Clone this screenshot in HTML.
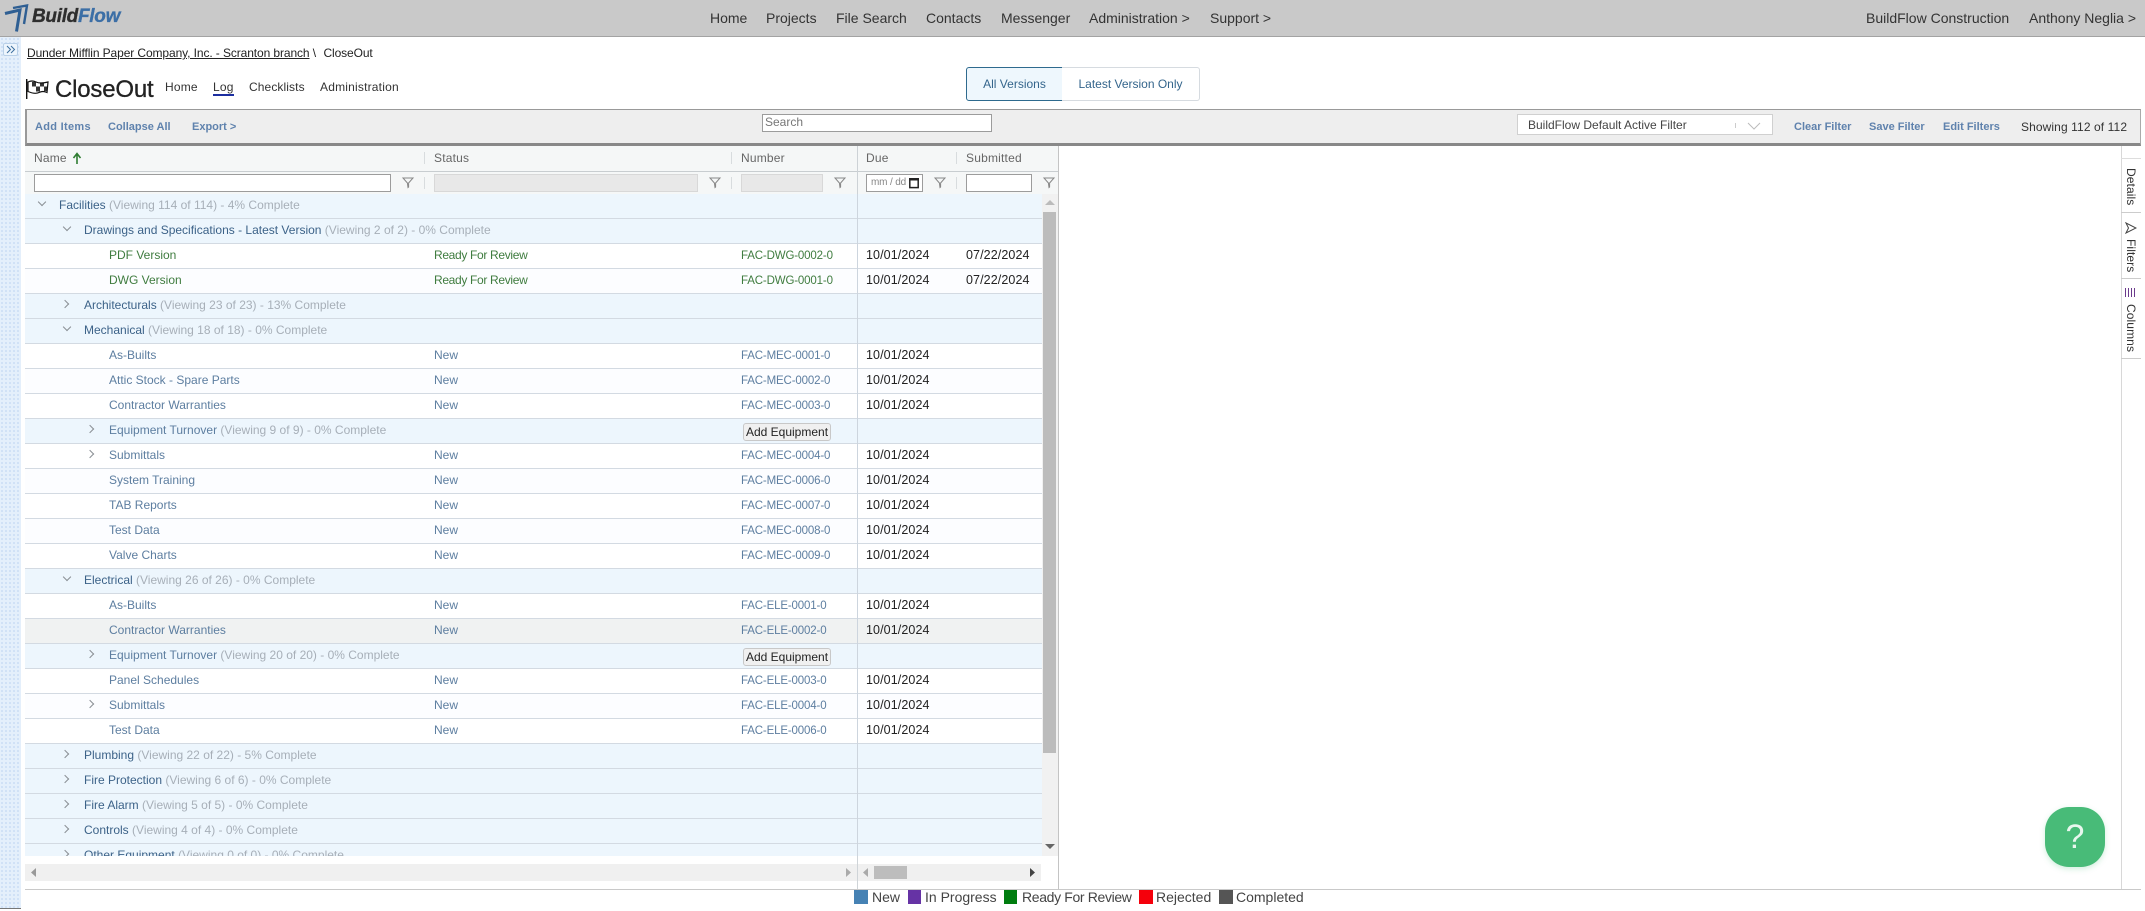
<!DOCTYPE html>
<html lang="en"><head><meta charset="utf-8"><title>CloseOut</title>
<style>
*{box-sizing:border-box}
html,body{margin:0;padding:0;width:2145px;height:911px;overflow:hidden;background:#fff;font-family:"Liberation Sans",sans-serif;font-size:12px;color:#333}
.a{position:absolute;white-space:nowrap}
#top{left:0;top:0;width:2145px;height:37px;background:#c9c9c9;border-bottom:1px solid #a3a3a3}
.n{top:9px;font-size:14px;color:#333;line-height:18px}
#side{left:0;top:37px;width:21px;height:872px;background-color:#e4effb;background-image:radial-gradient(#cfe0f6 1px,transparent 1.2px);background-size:4px 4px;border-bottom:1px solid #777}
#tog{left:3px;top:43px;width:15px;height:13px;background:#edf5fd;border:1px solid #b9d0e8;border-radius:2px}
.tab{top:80px;font-size:12px;letter-spacing:.2px;color:#333;line-height:14px}
#tb{left:25px;top:109px;width:2116px;height:37px;background:#eee;border:2px solid #999;border-width:1px 1px 3px 2px;border-color:#999 #aaa #888 #999}
.l{top:120px;font-size:11px;font-weight:bold;color:#5f82ad;line-height:14px}
.inp{position:absolute;background:#fff;border:1px solid #9c9c9c}
.dis{background:#e8e8e8;border:1px solid #d8d8d8}
#hd{left:25px;top:146px;width:1034px;height:48px;background:#f5f7f7;border-right:1px solid #ccc}
.hl{top:171px;left:25px;width:1034px;height:1px;background:#c8cdd0}
.h{top:151px;font-size:12px;letter-spacing:.2px;color:#666;line-height:15px}
.sep{width:1px;height:12px;background:#d8dcde;top:152px}
.sep2{width:1px;height:12px;background:#d8dcde;top:177px}
#rows{left:25px;top:194px;width:1017px;height:662px;overflow:hidden}
.r{position:relative;height:25px;width:1017px;border-bottom:1px solid #d3dae2;background:#fcfdff;line-height:22px;font-size:12px;color:#5d7ea0}
.r>*{position:absolute;top:0;white-space:nowrap}
.g{background:#edf6fd;color:#3c6288}
.g b{font-weight:normal;color:#a7afb8;position:static}
.w{background:#fff}
.hov{background:#f0f2f2}
.ready{color:#3f7c3f}
.ready .st{letter-spacing:-.33px}
.nm{left:84px}.nm1{left:59px}.nm0{left:34px}
.st{left:409px}
.r>.no{left:716px;top:1px;font-size:11.5px;letter-spacing:-.15px}
.du{left:841px;color:#222;font-size:12.5px;letter-spacing:.1px}
.su{left:941px;color:#222;font-size:12.5px;letter-spacing:.1px}
.vl{left:832px;top:0;width:1px;height:25px;background:#cdd5de}
.c{width:6px;height:6px;top:7px;border-right:1px solid #8a8f94;border-bottom:1px solid #8a8f94}
.cd{transform:rotate(45deg)}
.cr{transform:rotate(-45deg)}
.btn{left:718px;top:4px;width:88px;height:18px;background:#f0f0f0;border:1px solid #c8c8c8;border-radius:3px;font-size:12px;line-height:16px;text-align:center;color:#222}
.r>.btn{top:4px}
.r>.c{top:7px}
.r>.c.cd{top:5px}
.sw{top:890px;height:14px;width:14px}
.lg{top:889px;font-size:14px;line-height:16px;color:#444}
.vt{position:absolute;writing-mode:vertical-rl;font-size:12px;letter-spacing:.1px;color:#333;line-height:16px;white-space:nowrap}
svg{display:block}
</style></head><body>
<div class="a" id="top"></div>
<svg class="a" style="left:0;top:0" width="32" height="36" viewBox="0 0 32 36"><path d="M5 13.5 L20 10 L16.5 31.5" fill="none" stroke="#2f5f93" stroke-width="3"/><path d="M13 8 L27 5.5 L24 24" fill="none" stroke="#2f5f93" stroke-width="2.4"/></svg>
<div class="a" style="left:32px;top:5px;font-size:19px;line-height:24px;font-weight:bold;font-style:italic;letter-spacing:-.3px;color:#2e2e2e;-webkit-text-stroke:.3px">Build<span style="color:#3c6fa6">Flow</span></div>
<div class="a n" style="left:710px">Home</div><div class="a n" style="left:766px">Projects</div><div class="a n" style="left:836px">File Search</div><div class="a n" style="left:926px">Contacts</div><div class="a n" style="left:1001px">Messenger</div><div class="a n" style="left:1089px">Administration &gt;</div><div class="a n" style="left:1210px">Support &gt;</div>
<div class="a n" style="left:1866px">BuildFlow Construction</div><div class="a n" style="left:2029px">Anthony Neglia &gt;</div>

<div class="a" id="side"></div><div class="a" id="tog"></div>
<svg class="a" style="left:6px;top:45px" width="10" height="9" viewBox="0 0 10 9"><path d="M1 1 L4.5 4.5 L1 8 M5 1 L8.5 4.5 L5 8" fill="none" stroke="#3d6f9f" stroke-width="1"/></svg>
<div class="a" style="left:27px;top:45px;font-size:12px;line-height:16px;color:#222;letter-spacing:-.1px"><span style="text-decoration:underline">Dunder Mifflin Paper Company, Inc. - Scranton branch</span> \ &nbsp;<span style="margin-left:1px">CloseOut</span></div>

<svg class="a" style="left:26px;top:79px" width="23" height="20" viewBox="0 0 23 20"><rect x="0" y="0" width="1.4" height="20" fill="#111"/><path d="M2 3 Q6 1 10 3 T22 3 L21 13.5 Q17 11.5 13 13.5 T2 12.5 Z" fill="#fff" stroke="#111" stroke-width="1.2"/><path d="M6 3 L10 3 L10 7.5 L6 7.5 Z M14 3.5 L18 3.5 L18 7.5 L14 7.5 Z M10 7.5 L14 7.5 L14 12.5 L10 12.5 Z M18 7.5 L21 7.5 L21 12 L18 12 Z" fill="#111" opacity=".85"/></svg>
<div class="a" style="left:55px;top:74px;font-size:24px;line-height:31px;color:#222;letter-spacing:-.2px;-webkit-text-stroke:.3px #222">CloseOut</div>
<div class="a tab" style="left:165px">Home</div>
<div class="a tab" style="left:213px;border-bottom:2px solid #1c2ea0;height:16px">Log</div>
<div class="a tab" style="left:249px;letter-spacing:.1px">Checklists</div>
<div class="a tab" style="left:320px">Administration</div>

<div class="a" style="left:966px;top:67px;width:97px;height:34px;background:#eef7fd;border:1px solid #2e6a8e;border-radius:3px 0 0 3px;color:#34658c;text-align:center;line-height:32px;font-size:12px">All Versions</div>
<div class="a" style="left:1062px;top:67px;width:138px;height:34px;background:#fff;border:1px solid #d6dbe0;border-left:0;border-radius:0 3px 3px 0;color:#34658c;text-align:center;line-height:32px;font-size:12px">Latest Version Only</div>

<div class="a" id="tb"></div>
<div class="a l" style="left:35px;letter-spacing:.3px">Add Items</div><div class="a l" style="left:108px">Collapse All</div><div class="a l" style="left:192px">Export &gt;</div>
<div class="a" style="left:762px;top:114px;width:230px;height:18px;background:#fff;border:1px solid #9c9c9c;color:#777;font-size:12px;line-height:15px;padding-left:2px">Search</div>
<div class="a" style="left:1517px;top:114px;width:256px;height:21px;background:#fff;border:1px solid #d0d0d0;color:#444;font-size:12px;line-height:21px;padding-left:10px">BuildFlow Default Active Filter</div>
<div class="a" style="left:1735px;top:123px;width:1px;height:5px;background:#ccc"></div>
<svg class="a" style="left:1747px;top:122px" width="14" height="8" viewBox="0 0 14 8"><path d="M1 1 L7 7 L13 1" fill="none" stroke="#bbb" stroke-width="1"/></svg>
<div class="a l" style="left:1794px">Clear Filter</div><div class="a l" style="left:1869px">Save Filter</div><div class="a l" style="left:1943px">Edit Filters</div>
<div class="a" style="left:2021px;top:120px;font-size:12px;line-height:14px;color:#333;letter-spacing:.1px">Showing 112 of 112</div>

<div class="a" id="hd"></div><div class="a hl"></div>
<div class="a h" style="left:34px">Name</div>
<svg class="a" style="left:72px;top:152px" width="10" height="13" viewBox="0 0 10 13"><path d="M5 12 V2 M1.5 6 L5 1.5 L8.5 6" fill="none" stroke="#2f7d32" stroke-width="1.6"/></svg>
<div class="a h" style="left:434px">Status</div><div class="a h" style="left:741px">Number</div><div class="a h" style="left:866px">Due</div><div class="a h" style="left:966px">Submitted</div>
<div class="a sep" style="left:424px"></div><div class="a sep" style="left:731px"></div><div class="a sep" style="left:956px"></div>
<div class="a" style="left:857px;top:146px;width:1px;height:48px;background:#cdd2d6"></div>
<div class="a sep2" style="left:424px"></div><div class="a sep2" style="left:731px"></div><div class="a sep2" style="left:956px"></div>
<div class="inp" style="left:34px;top:174px;width:357px;height:18px"></div>
<div class="inp dis" style="left:434px;top:174px;width:264px;height:18px"></div>
<div class="inp dis" style="left:741px;top:174px;width:82px;height:18px"></div>
<div class="inp" style="left:866px;top:174px;width:57px;height:18px;font-size:10px;line-height:16px;color:#888;padding-left:4px;white-space:nowrap;letter-spacing:-.15px">mm / dd</div>
<svg class="a" style="left:908px;top:176px" width="12" height="14" viewBox="0 0 12 14"><rect x="1.8" y="3" width="8.4" height="8.6" fill="#fff" stroke="#222" stroke-width="1.5"/><rect x="1" y="2" width="10" height="2.5" fill="#222"/></svg>
<div class="inp" style="left:966px;top:174px;width:66px;height:18px"></div>
<svg class="a" style="left:401px;top:176px" width="14" height="13" viewBox="0 0 14 13"><path d="M2 2 H12 L7.6 7 V11 L7 11.5 L6.4 7 Z" fill="none" stroke="#888" stroke-width="1"/></svg>
<svg class="a" style="left:708px;top:176px" width="14" height="13" viewBox="0 0 14 13"><path d="M2 2 H12 L7.6 7 V11 L7 11.5 L6.4 7 Z" fill="none" stroke="#888" stroke-width="1"/></svg>
<svg class="a" style="left:833px;top:176px" width="14" height="13" viewBox="0 0 14 13"><path d="M2 2 H12 L7.6 7 V11 L7 11.5 L6.4 7 Z" fill="none" stroke="#888" stroke-width="1"/></svg>
<svg class="a" style="left:933px;top:176px" width="14" height="13" viewBox="0 0 14 13"><path d="M2 2 H12 L7.6 7 V11 L7 11.5 L6.4 7 Z" fill="none" stroke="#888" stroke-width="1"/></svg>
<svg class="a" style="left:1042px;top:176px" width="14" height="13" viewBox="0 0 14 13"><path d="M2 2 H12 L7.6 7 V11 L7 11.5 L6.4 7 Z" fill="none" stroke="#888" stroke-width="1"/></svg>

<div class="a" id="rows">
<div class="r g"><i class="c cd" style="left:14px"></i><span class="nm0">Facilities <b>(Viewing 114 of 114) - 4% Complete</b></span><i class="vl"></i></div>
<div class="r g"><i class="c cd" style="left:39px"></i><span class="nm1">Drawings and Specifications - Latest Version <b>(Viewing 2 of 2) - 0% Complete</b></span><i class="vl"></i></div>
<div class="r w ready"><span class="nm">PDF Version</span><span class="st">Ready For Review</span><span class="no">FAC-DWG-0002-0</span><i class="vl"></i><span class="du">10/01/2024</span><span class="su">07/22/2024</span></div>
<div class="r ready"><span class="nm">DWG Version</span><span class="st">Ready For Review</span><span class="no">FAC-DWG-0001-0</span><i class="vl"></i><span class="du">10/01/2024</span><span class="su">07/22/2024</span></div>
<div class="r g"><i class="c cr" style="left:37px"></i><span class="nm1">Architecturals <b>(Viewing 23 of 23) - 13% Complete</b></span><i class="vl"></i></div>
<div class="r g"><i class="c cd" style="left:39px"></i><span class="nm1">Mechanical <b>(Viewing 18 of 18) - 0% Complete</b></span><i class="vl"></i></div>
<div class="r w"><span class="nm">As-Builts</span><span class="st">New</span><span class="no">FAC-MEC-0001-0</span><i class="vl"></i><span class="du">10/01/2024</span></div>
<div class="r"><span class="nm">Attic Stock - Spare Parts</span><span class="st">New</span><span class="no">FAC-MEC-0002-0</span><i class="vl"></i><span class="du">10/01/2024</span></div>
<div class="r w"><span class="nm">Contractor Warranties</span><span class="st">New</span><span class="no">FAC-MEC-0003-0</span><i class="vl"></i><span class="du">10/01/2024</span></div>
<div class="r g" style="color:#5d7ea0"><i class="c cr" style="left:62px"></i><span class="nm">Equipment Turnover <b>(Viewing 9 of 9) - 0% Complete</b></span><span class="btn">Add Equipment</span><i class="vl"></i></div>
<div class="r w"><i class="c cr" style="left:62px"></i><span class="nm">Submittals</span><span class="st">New</span><span class="no">FAC-MEC-0004-0</span><i class="vl"></i><span class="du">10/01/2024</span></div>
<div class="r"><span class="nm">System Training</span><span class="st">New</span><span class="no">FAC-MEC-0006-0</span><i class="vl"></i><span class="du">10/01/2024</span></div>
<div class="r w"><span class="nm">TAB Reports</span><span class="st">New</span><span class="no">FAC-MEC-0007-0</span><i class="vl"></i><span class="du">10/01/2024</span></div>
<div class="r"><span class="nm">Test Data</span><span class="st">New</span><span class="no">FAC-MEC-0008-0</span><i class="vl"></i><span class="du">10/01/2024</span></div>
<div class="r w"><span class="nm">Valve Charts</span><span class="st">New</span><span class="no">FAC-MEC-0009-0</span><i class="vl"></i><span class="du">10/01/2024</span></div>
<div class="r g"><i class="c cd" style="left:39px"></i><span class="nm1">Electrical <b>(Viewing 26 of 26) - 0% Complete</b></span><i class="vl"></i></div>
<div class="r w"><span class="nm">As-Builts</span><span class="st">New</span><span class="no">FAC-ELE-0001-0</span><i class="vl"></i><span class="du">10/01/2024</span></div>
<div class="r hov"><span class="nm">Contractor Warranties</span><span class="st">New</span><span class="no">FAC-ELE-0002-0</span><i class="vl"></i><span class="du">10/01/2024</span></div>
<div class="r g" style="color:#5d7ea0"><i class="c cr" style="left:62px"></i><span class="nm">Equipment Turnover <b>(Viewing 20 of 20) - 0% Complete</b></span><span class="btn">Add Equipment</span><i class="vl"></i></div>
<div class="r w"><span class="nm">Panel Schedules</span><span class="st">New</span><span class="no">FAC-ELE-0003-0</span><i class="vl"></i><span class="du">10/01/2024</span></div>
<div class="r"><i class="c cr" style="left:62px"></i><span class="nm">Submittals</span><span class="st">New</span><span class="no">FAC-ELE-0004-0</span><i class="vl"></i><span class="du">10/01/2024</span></div>
<div class="r w"><span class="nm">Test Data</span><span class="st">New</span><span class="no">FAC-ELE-0006-0</span><i class="vl"></i><span class="du">10/01/2024</span></div>
<div class="r g"><i class="c cr" style="left:37px"></i><span class="nm1">Plumbing <b>(Viewing 22 of 22) - 5% Complete</b></span><i class="vl"></i></div>
<div class="r g"><i class="c cr" style="left:37px"></i><span class="nm1">Fire Protection <b>(Viewing 6 of 6) - 0% Complete</b></span><i class="vl"></i></div>
<div class="r g"><i class="c cr" style="left:37px"></i><span class="nm1">Fire Alarm <b>(Viewing 5 of 5) - 0% Complete</b></span><i class="vl"></i></div>
<div class="r g"><i class="c cr" style="left:37px"></i><span class="nm1">Controls <b>(Viewing 4 of 4) - 0% Complete</b></span><i class="vl"></i></div>
<div class="r g"><i class="c cr" style="left:37px"></i><span class="nm1">Other Equipment <b>(Viewing 0 of 0) - 0% Complete</b></span><i class="vl"></i></div>
</div>

<div class="a" style="left:1042px;top:194px;width:16px;height:662px;background:#f1f1f1"></div>
<div class="a" style="left:1043px;top:212px;width:13px;height:541px;background:#bcbcbc"></div>
<svg class="a" style="left:1045px;top:200px" width="10" height="6"><path d="M5 0 L10 5 H0 Z" fill="#bbb"/></svg>
<svg class="a" style="left:1045px;top:844px" width="10" height="6"><path d="M0 0 H10 L5 5 Z" fill="#666"/></svg>
<div class="a" style="left:1058px;top:146px;width:1px;height:743px;background:#c4c4c4"></div>
<div class="a" style="left:25px;top:864px;width:832px;height:17px;background:#f0f0f0"></div>
<div class="a" style="left:858px;top:864px;width:183px;height:17px;background:#f0f0f0"></div>
<div class="a" style="left:857px;top:856px;width:1px;height:33px;background:#cfd4d8"></div>
<div class="a" style="left:874px;top:866px;width:33px;height:13px;background:#bdbdbd"></div>
<svg class="a" style="left:31px;top:868px" width="5" height="9"><path d="M5 0 V9 L0 4.5 Z" fill="#999"/></svg>
<svg class="a" style="left:846px;top:868px" width="5" height="9"><path d="M0 0 V9 L5 4.5 Z" fill="#aaa"/></svg>
<svg class="a" style="left:863px;top:868px" width="5" height="9"><path d="M5 0 V9 L0 4.5 Z" fill="#aaa"/></svg>
<svg class="a" style="left:1030px;top:868px" width="5" height="9"><path d="M0 0 V9 L5 4.5 Z" fill="#444"/></svg>
<div class="a" style="left:25px;top:889px;width:2116px;height:1px;background:#c9c9c9"></div>

<div class="a" style="left:2121px;top:146px;width:1px;height:743px;background:#d8d8d8"></div>
<div class="a" style="left:2121px;top:158px;width:20px;height:1px;background:#ddd"></div>
<div class="a" style="left:2121px;top:212px;width:20px;height:1px;background:#ccc"></div>
<div class="a" style="left:2121px;top:278px;width:20px;height:1px;background:#ccc"></div>
<div class="a" style="left:2121px;top:358px;width:20px;height:1px;background:#ccc"></div>
<div class="vt" style="left:2123px;top:168px">Details</div>
<svg class="a" style="left:2125px;top:222px" width="12" height="12" viewBox="0 0 12 12"><path d="M1 1 L11 6 L1 11 L3.5 6 Z" fill="none" stroke="#444" stroke-width="1"/></svg>
<div class="vt" style="left:2123px;top:239px">Filters</div>
<svg class="a" style="left:2125px;top:288px" width="11" height="9" viewBox="0 0 11 9"><path d="M.5 0 V9 M3.5 0 V9 M6.5 0 V9 M9.5 0 V9" stroke="#6b3a8c" stroke-width="1"/></svg>
<div class="vt" style="left:2123px;top:304px">Columns</div>

<div class="a sw" style="left:854px;background:#4682b4"></div><div class="a lg" style="left:872px">New</div>
<div class="a sw" style="left:908px;background:#6633a5;width:13px"></div><div class="a lg" style="left:925px">In Progress</div>
<div class="a sw" style="left:1004px;background:#007d0f;width:13px"></div><div class="a lg" style="left:1022px;letter-spacing:-.35px">Ready For Review</div>
<div class="a sw" style="left:1139px;background:#f5000b"></div><div class="a lg" style="left:1156px">Rejected</div>
<div class="a sw" style="left:1219px;background:#555"></div><div class="a lg" style="left:1236px">Completed</div>

<div class="a" style="left:2045px;top:807px;width:60px;height:60px;background:#48bb78;border-radius:24px;box-shadow:0 2px 6px rgba(72,187,120,.25);color:#e8f7ee;text-align:center;font-size:34px;line-height:60px">?</div>
</body></html>
